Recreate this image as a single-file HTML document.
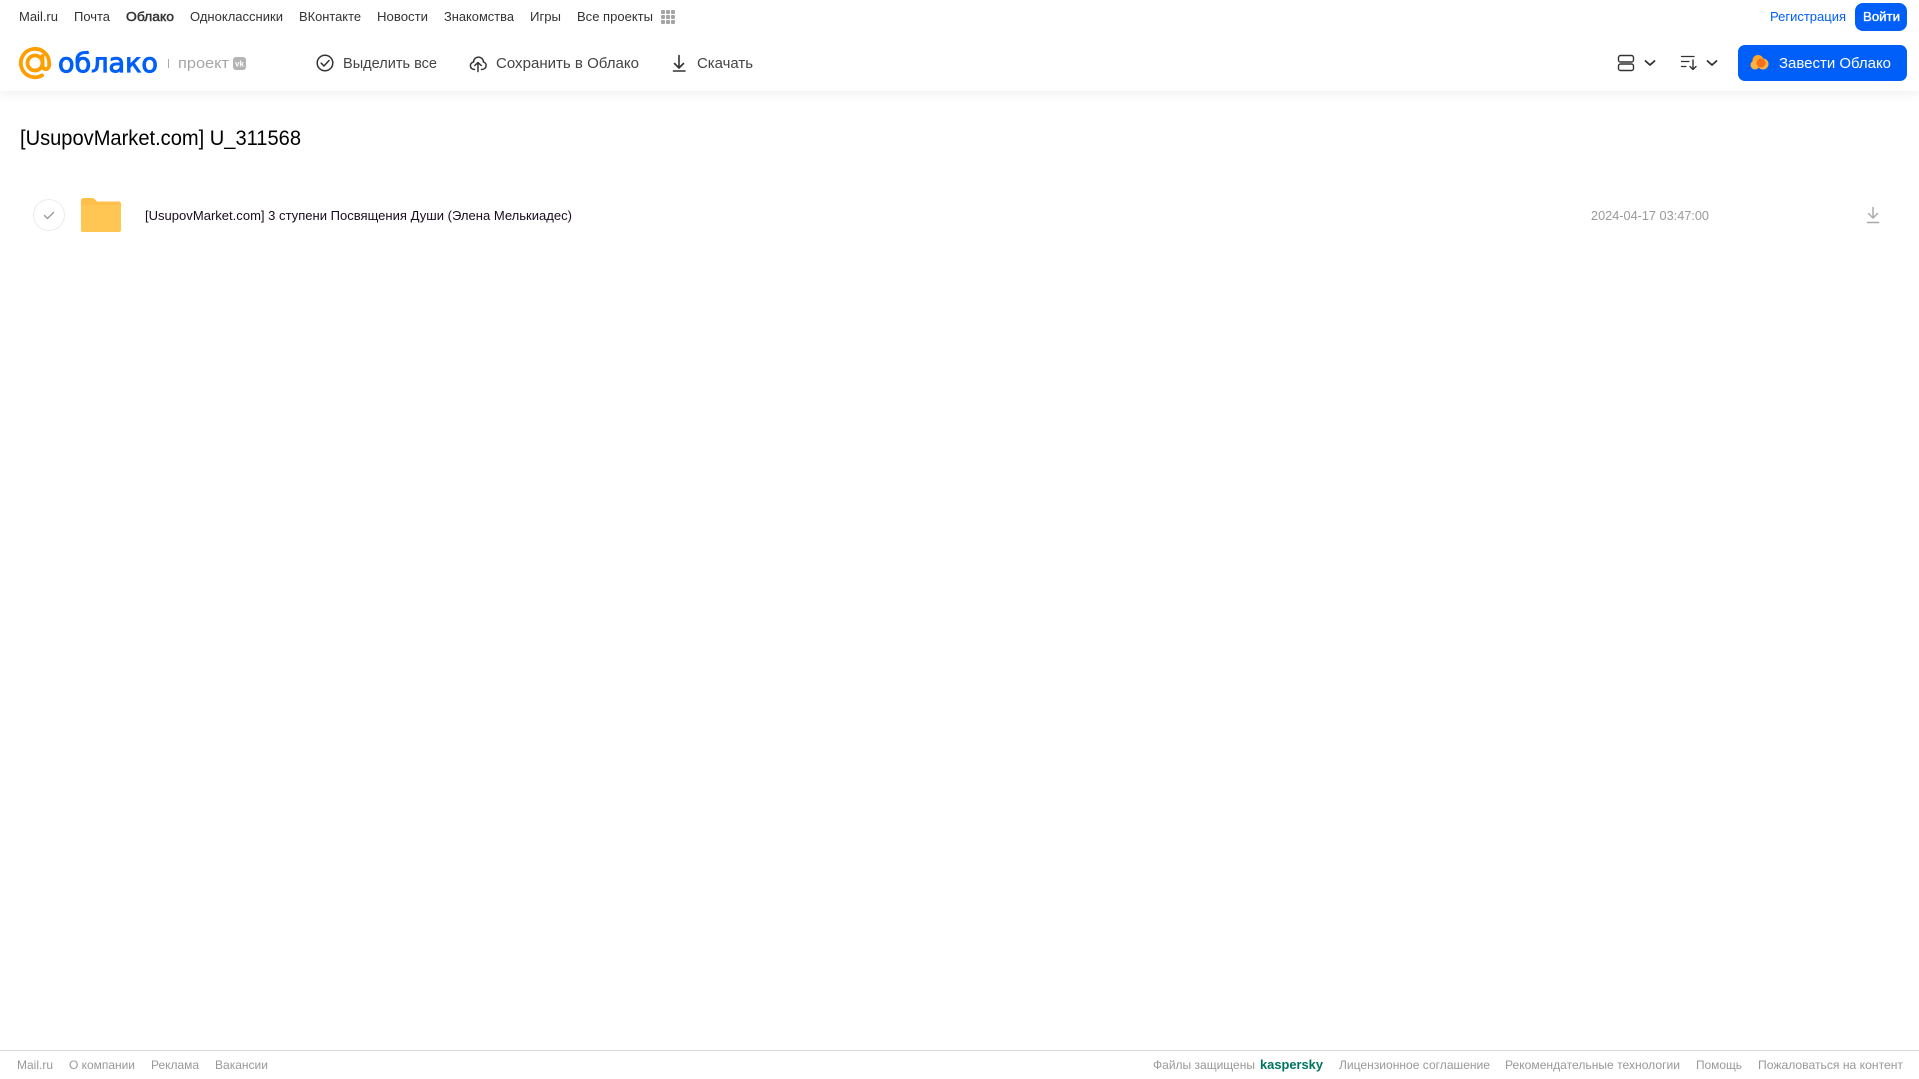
<!DOCTYPE html>
<html lang="ru"><head><meta charset="utf-8"><title>Облако</title>
<style>
html,body{margin:0;padding:0;background:#fff}
body{width:1919px;height:1079px;position:relative;overflow:hidden;font-family:"Liberation Sans",sans-serif}
svg.full{position:absolute;left:0;top:0}
.hdr{position:absolute;left:0;top:0;width:1919px;height:91px;background:#fff;box-shadow:0 2px 10px rgba(0,0,0,.07)}
.btn{position:absolute;background:#005ff9;border-radius:8px}
.fline{position:absolute;left:0;top:1050px;width:1919px;height:1px;background:#d8d8d8}
</style></head><body>
<div class="hdr"></div>
<div class="btn" style="left:1855px;top:3px;width:52px;height:28px"></div>
<div class="btn" style="left:1738px;top:45px;width:169px;height:36px;border-radius:7px"></div>
<div class="fline"></div>
<svg class="full" width="1919" height="1079" viewBox="0 0 1919 1079" xmlns="http://www.w3.org/2000/svg" font-family="'Liberation Sans',sans-serif">
<!-- top nav -->
<g font-size="13" fill="#333">
<text x="19" y="21" textLength="39" lengthAdjust="spacingAndGlyphs">Mail.ru</text>
<text x="74" y="21" textLength="36" lengthAdjust="spacingAndGlyphs">Почта</text>
<text x="126" y="21" textLength="48" lengthAdjust="spacingAndGlyphs" stroke="#333" stroke-width=".45">Облако</text>
<text x="190" y="21" textLength="93" lengthAdjust="spacingAndGlyphs">Одноклассники</text>
<text x="299" y="21" textLength="62" lengthAdjust="spacingAndGlyphs">ВКонтакте</text>
<text x="377" y="21" textLength="51" lengthAdjust="spacingAndGlyphs">Новости</text>
<text x="444" y="21" textLength="70" lengthAdjust="spacingAndGlyphs">Знакомства</text>
<text x="530" y="21" textLength="31" lengthAdjust="spacingAndGlyphs">Игры</text>
<text x="577" y="21" textLength="76" lengthAdjust="spacingAndGlyphs">Все проекты</text>
</g>
<g fill="#a5a5a5">
<rect x="661" y="10" width="4" height="4" rx="1"/><rect x="666" y="10" width="4" height="4" rx="1"/><rect x="671" y="10" width="4" height="4" rx="1"/>
<rect x="661" y="15" width="4" height="4" rx="1"/><rect x="666" y="15" width="4" height="4" rx="1"/><rect x="671" y="15" width="4" height="4" rx="1"/>
<rect x="661" y="20" width="4" height="4" rx="1"/><rect x="666" y="20" width="4" height="4" rx="1"/><rect x="671" y="20" width="4" height="4" rx="1"/>
</g>
<text x="1770" y="21" font-size="13" fill="#005ff9" textLength="76" lengthAdjust="spacingAndGlyphs">Регистрация</text>
<text x="1863" y="21" font-size="13" fill="#fff" stroke="#fff" stroke-width=".35" textLength="37" lengthAdjust="spacingAndGlyphs">Войти</text>
<!-- logo -->
<g fill="none" stroke="#ff9e00" stroke-width="3.8" stroke-linecap="round">
<circle cx="35" cy="63" r="7.500"/>
<path d="M42.500 56V65.500C42.500 70.500 49.200 70.500 49.200 64.500V63A14.200 14.200 0 1 0 42 75.400"/>
</g>
<text x="58" y="72" font-size="27" fill="#005ff9" stroke="#005ff9" stroke-width="1" textLength="100" lengthAdjust="spacingAndGlyphs" font-family="'DejaVu Sans',sans-serif">облако</text>
<rect x="168" y="59" width="1" height="9" fill="#aaa"/>
<text x="178" y="68" font-size="15" fill="#a6a6a6" textLength="51" lengthAdjust="spacingAndGlyphs">проект</text>
<rect x="233" y="57" width="13" height="13" rx="3" fill="#b4b4b4"/>
<text x="235" y="66.500" font-size="8" font-weight="700" fill="#fff" textLength="9" lengthAdjust="spacingAndGlyphs">vk</text>
<!-- toolbar -->
<g fill="none" stroke="#333" stroke-width="1.500" stroke-linecap="round" stroke-linejoin="round">
<circle cx="325" cy="63" r="7.800"/>
<path d="M321.200 63.200L324 66L329 60.500"/>
<path d="M474.500 69.500C469.500 69.500 469 63 473.500 62C474 55.500 483 55.500 483.500 62C487.500 63 487 69.500 481.500 69.500"/>
<path d="M478 71.500V62.500M474.800 65.500L478 62.500L481.200 65.500"/>
<path d="M679 55.500V67.500M674.500 63.500L679 68L683.500 63.500" stroke-width="1.600"/>
<path d="M673.500 71H685" stroke-width="1.600"/>
<rect x="1618.500" y="55.500" width="15" height="6.500" rx="2" stroke-width="1.400"/>
<rect x="1618.500" y="64" width="15" height="6.500" rx="2" stroke-width="1.400"/>
<path d="M1645.500 61L1650 65L1654.500 61" stroke-width="1.800"/>
<path d="M1681.500 56.500H1694M1681.500 61.500H1689M1681.500 66.500H1686" stroke-width="1.300"/>
<path d="M1693 60V69.500M1690 66.500L1693 69.500L1696 66.500" stroke-width="1.400"/>
<path d="M1707.500 61L1712 65L1716.500 61" stroke-width="1.800"/>
</g>
<g font-size="14.500" fill="#444">
<text x="343" y="68" textLength="94" lengthAdjust="spacingAndGlyphs">Выделить все</text>
<text x="496" y="68" textLength="143" lengthAdjust="spacingAndGlyphs">Сохранить в Облако</text>
<text x="697" y="68" textLength="56" lengthAdjust="spacingAndGlyphs">Скачать</text>
</g>
<!-- cta -->
<circle cx="1758" cy="60.500" r="5.500" fill="#ffa726"/>
<circle cx="1763" cy="64" r="5.500" fill="#ffb23c"/>
<circle cx="1755" cy="65" r="4.500" fill="#ffb23c"/>
<circle cx="1761" cy="63" r="4.500" fill="#f4701f"/>
<text x="1779" y="68" font-size="14.500" fill="#fff" textLength="112" lengthAdjust="spacingAndGlyphs">Завести Облако</text>
<!-- title -->
<text x="20" y="145" font-size="21" fill="#000" textLength="281" lengthAdjust="spacingAndGlyphs">[UsupovMarket.com] U_311568</text>
<!-- row -->
<circle cx="49" cy="215" r="15.500" fill="#fff" stroke="#ececec" stroke-width="1"/>
<path d="M44.500 215.500L47.500 218.500L53.500 212.500" fill="none" stroke="#999" stroke-width="1.400" stroke-linecap="round" stroke-linejoin="round"/>
<path d="M81 201C81 199 82 198 84 198H91.500C93.500 198 94.500 198.800 95.500 200L97 201.500H118.500C120 201.500 121 202.500 121 204V229.500C121 231 120 232 118.500 232H83.500C82 232 81 231 81 229.500Z" fill="#ffbf4a"/>
<rect x="81" y="205" width="40" height="27" rx="2" fill="#ffc653"/>
<text x="145" y="220" font-size="13" fill="#1a0a22" textLength="427" lengthAdjust="spacingAndGlyphs">[UsupovMarket.com] 3 ступени Посвящения Души (Элена Мелькиадес)</text>
<text x="1591" y="220" font-size="13" fill="#999" textLength="118" lengthAdjust="spacingAndGlyphs">2024-04-17 03:47:00</text>
<g fill="none" stroke="#aaa" stroke-width="1.500" stroke-linecap="round" stroke-linejoin="round">
<path d="M1873 207.500V218M1868.500 213.500L1873 218L1877.500 213.500"/>
<path d="M1867.500 222.500H1878.500"/>
</g>
<!-- footer -->
<g font-size="12" fill="#999">
<text x="17" y="1069" textLength="36" lengthAdjust="spacingAndGlyphs">Mail.ru</text>
<text x="69" y="1069" textLength="66" lengthAdjust="spacingAndGlyphs">О компании</text>
<text x="151" y="1069" textLength="48" lengthAdjust="spacingAndGlyphs">Реклама</text>
<text x="215" y="1069" textLength="53" lengthAdjust="spacingAndGlyphs">Вакансии</text>
<text x="1153" y="1069" textLength="102" lengthAdjust="spacingAndGlyphs">Файлы защищены</text>
<text x="1260" y="1069" font-size="13" font-weight="700" fill="#00745f" textLength="63" lengthAdjust="spacingAndGlyphs">kaspersky</text>
<text x="1339" y="1069" textLength="151" lengthAdjust="spacingAndGlyphs">Лицензионное соглашение</text>
<text x="1505" y="1069" textLength="175" lengthAdjust="spacingAndGlyphs">Рекомендательные технологии</text>
<text x="1696" y="1069" textLength="46" lengthAdjust="spacingAndGlyphs">Помощь</text>
<text x="1758" y="1069" textLength="145" lengthAdjust="spacingAndGlyphs">Пожаловаться на контент</text>
</g>
</svg>
</body></html>
